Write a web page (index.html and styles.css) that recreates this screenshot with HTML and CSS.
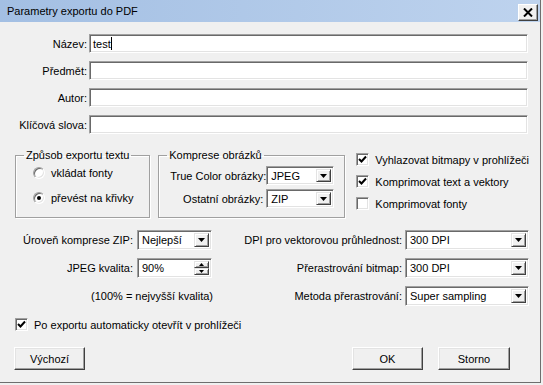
FILE: index.html
```html
<!DOCTYPE html>
<html lang="cs">
<head>
<meta charset="utf-8">
<title>Parametry exportu do PDF</title>
<link rel="stylesheet" href="styles.css">
</head>
<body>
<div class="window">
  <div class="titlebar">
    <span class="title">Parametry exportu do PDF</span>
    <div class="close"><svg width="10" height="9" viewBox="0 0 10 9"><path d="M1 0.5L9 8.5M9 0.5L1 8.5" stroke="#000" stroke-width="2"/></svg></div>
  </div>
  <div class="content">
    <div class="fields">
      <span class="lbl">Název:</span><div class="input">test<span class="caret"></span></div>
      <span class="lbl">Předmět:</span><div class="input"></div>
      <span class="lbl">Autor:</span><div class="input"></div>
      <span class="lbl">Klíčová slova:</span><div class="input"></div>
    </div>

    <div class="middle">
      <fieldset class="group g1">
        <legend>Způsob exportu textu</legend>
        <div class="g1-inner">
          <div class="radio"><span class="rbox"></span><span>vkládat fonty</span></div>
          <div class="radio"><span class="rbox on"></span><span>převést na křivky</span></div>
        </div>
      </fieldset>
      <fieldset class="group g2">
        <legend>Komprese obrázků</legend>
        <div class="g2-inner">
          <span class="lbl">True Color obrázky:</span>
          <div class="select"><span class="val">JPEG</span><span class="dd"><svg width="7" height="4" viewBox="0 0 7 4"><path d="M0 0h7L3.5 4z"/></svg></span></div>
          <span class="lbl">Ostatní obrázky:</span>
          <div class="select"><span class="val">ZIP</span><span class="dd"><svg width="7" height="4" viewBox="0 0 7 4"><path d="M0 0h7L3.5 4z"/></svg></span></div>
        </div>
      </fieldset>
      <div class="checks">
        <div class="check"><span class="cbox"><svg width="9" height="9" viewBox="0 0 9 9"><path d="M1 4L3.5 6.5L8 1.5" fill="none" stroke="#000" stroke-width="2"/></svg></span><span>Vyhlazovat bitmapy v prohlížeči</span></div>
        <div class="check"><span class="cbox"><svg width="9" height="9" viewBox="0 0 9 9"><path d="M1 4L3.5 6.5L8 1.5" fill="none" stroke="#000" stroke-width="2"/></svg></span><span>Komprimovat text a vektory</span></div>
        <div class="check"><span class="cbox"></span><span>Komprimovat fonty</span></div>
      </div>
    </div>

    <div class="lower">
      <div class="lower-left">
        <span class="lbl">Úroveň komprese ZIP:</span>
        <div class="select"><span class="val">Nejlepší</span><span class="dd"><svg width="7" height="4" viewBox="0 0 7 4"><path d="M0 0h7L3.5 4z"/></svg></span></div>
        <span class="lbl">JPEG kvalita:</span>
        <div class="spin"><span class="val">90%</span><span class="spinbtns"><span class="sb"><svg width="5" height="3" viewBox="0 0 5 3"><path d="M2.5 0L5 3H0z"/></svg></span><span class="sb"><svg width="5" height="3" viewBox="0 0 5 3"><path d="M0 0h5L2.5 3z"/></svg></span></span></div>
        <span class="note">(100% = nejvyšší kvalita)</span>
      </div>
      <div class="lower-right">
        <span class="lbl">DPI pro vektorovou průhlednost:</span>
        <div class="select"><span class="val">300 DPI</span><span class="dd"><svg width="7" height="4" viewBox="0 0 7 4"><path d="M0 0h7L3.5 4z"/></svg></span></div>
        <span class="lbl">Přerastrování bitmap:</span>
        <div class="select"><span class="val">300 DPI</span><span class="dd"><svg width="7" height="4" viewBox="0 0 7 4"><path d="M0 0h7L3.5 4z"/></svg></span></div>
        <span class="lbl">Metoda přerastrování:</span>
        <div class="select"><span class="val">Super sampling</span><span class="dd"><svg width="7" height="4" viewBox="0 0 7 4"><path d="M0 0h7L3.5 4z"/></svg></span></div>
      </div>
    </div>

    <div class="check autoopen"><span class="cbox"><svg width="9" height="9" viewBox="0 0 9 9"><path d="M1 4L3.5 6.5L8 1.5" fill="none" stroke="#000" stroke-width="2"/></svg></span><span>Po exportu automaticky otevřít v prohlížeči</span></div>

    <div class="buttons">
      <div class="btn">Výchozí</div>
      <div class="btn ok">OK</div>
      <div class="btn storno">Storno</div>
    </div>
  </div>
</div>
</body>
</html>
```
FILE: styles.css
```css
html, body {
  margin: 0;
  padding: 0;
}
body {
  background: #f0f0f0;
  font-family: "Liberation Sans", Arial, sans-serif;
  font-size: 11px;
  color: #000;
  width: 543px;
  height: 385px;
  overflow: hidden;
}
.window {
  width: 540px;
  height: 382px;
  border-right: 1px solid #6e6e6e;
  border-bottom: 1px solid #6e6e6e;
  background: #f0f0f0;
  box-sizing: content-box;
}
.titlebar {
  height: 22px;
  background: linear-gradient(to right, #a3bfe3, #bed3ee);
  display: flex;
  align-items: flex-start;
  padding: 0 2px 0 7px;
}
.title {
  flex: 1;
  line-height: 23px;
}
.close {
  margin-top: 4px;
  width: 20px;
  height: 17px;
  box-sizing: border-box;
  background: #f0f0f0;
  border: 1px solid;
  border-color: #fff #404040 #404040 #fff;
  box-shadow: inset -1px -1px #a0a0a0;
  display: flex;
  align-items: center;
  justify-content: center;
}
.close svg { display: block; }
.content {
  padding: 12px 11px 0 14px;
}
.lbl {
  text-align: right;
  white-space: nowrap;
}
.fields {
  display: grid;
  grid-template-columns: 73px 439px;
  column-gap: 2px;
  row-gap: 8px;
  grid-auto-rows: 19px;
  align-items: center;
}
.input, .select, .spin {
  height: 100%;
  box-sizing: border-box;
  background: #fff;
  border: 1px solid;
  border-color: #a0a0a0 #fff #fff #a0a0a0;
  box-shadow: inset 1px 1px #696969, inset -1px -1px #e3e3e3;
  display: flex;
  align-items: center;
  padding-left: 3px;
  white-space: nowrap;
}
.caret {
  display: inline-block;
  width: 1px;
  height: 13px;
  background: #000;
}
.select .val, .spin .val {
  flex: 1;
  padding-left: 1px;
}
.dd {
  align-self: stretch;
  margin: 2px 2px 2px 0;
  width: 15px;
  box-sizing: border-box;
  background: #f0f0f0;
  border: 1px solid;
  border-color: #e3e3e3 #404040 #404040 #e3e3e3;
  box-shadow: inset 1px 1px #fff, inset -1px -1px #a0a0a0;
  display: flex;
  align-items: center;
  justify-content: center;
}
.dd svg, .sb svg { display: block; }
.middle {
  display: flex;
  align-items: flex-start;
  margin-top: 15px;
  margin-left: 1px;
}
.group {
  margin: 0;
  padding: 0;
  border: 1px solid #a0a0a0;
  box-shadow: 1px 1px 0 #fff, inset 1px 1px 0 #fff;
  box-sizing: border-box;
  height: 69px;
  min-width: 0;
}
.group legend {
  margin-left: 8px;
  padding: 0 2px;
  line-height: 12px;
}
.g1 { width: 138px; }
.g2 { width: 191px; margin-left: 8px; }
.g1-inner {
  padding: 5px 0 0 17px;
  display: flex;
  flex-direction: column;
  gap: 11px;
}
.radio {
  display: flex;
  align-items: center;
  gap: 6px;
  height: 14px;
}
.rbox {
  width: 12px;
  height: 12px;
  box-sizing: border-box;
  border-radius: 50%;
  background: #fff;
  border: 1px solid;
  border-color: #a0a0a0 #fff #fff #a0a0a0;
  box-shadow: inset 1px 1px #696969, inset -1px -1px #e3e3e3;
  display: flex;
  align-items: center;
  justify-content: center;
}
.rbox.on::after {
  content: "";
  width: 4px;
  height: 4px;
  border-radius: 50%;
  background: #000;
}
.g2-inner {
  padding: 5px 0 0 11px;
  display: grid;
  grid-template-columns: 93px 68px;
  column-gap: 3px;
  row-gap: 4px;
  grid-auto-rows: 19px;
  align-items: center;
}
.checks {
  margin-left: 11px;
  margin-top: 4px;
  display: flex;
  flex-direction: column;
  gap: 9px;
}
.check {
  display: flex;
  align-items: center;
  gap: 6px;
  height: 13px;
  white-space: nowrap;
}
.cbox {
  width: 13px;
  height: 13px;
  box-sizing: border-box;
  background: #fff;
  border: 1px solid;
  border-color: #a0a0a0 #fff #fff #a0a0a0;
  box-shadow: inset 1px 1px #696969, inset -1px -1px #e3e3e3;
  display: flex;
  align-items: center;
  justify-content: center;
  flex: none;
}
.cbox svg { display: block; }
.lower {
  display: flex;
  margin-top: 12px;
}
.lower-left {
  display: grid;
  grid-template-columns: 119px 75px;
  column-gap: 4px;
  row-gap: 8px;
  grid-auto-rows: 20px;
  align-items: center;
}
.note {
  grid-column: 1 / -1;
  text-align: right;
  margin-right: -1px;
}
.spin .spinbtns {
  align-self: stretch;
  margin: 2px 2px 2px 0;
  width: 15px;
  display: flex;
  flex-direction: column;
}
.sb {
  flex: 1;
  box-sizing: border-box;
  background: #f0f0f0;
  border: 1px solid;
  border-color: #e3e3e3 #404040 #404040 #e3e3e3;
  box-shadow: inset 1px 1px #fff, inset -1px -1px #a0a0a0;
  display: flex;
  align-items: center;
  justify-content: center;
}
.lower-right {
  margin-left: auto;
  display: grid;
  grid-template-columns: auto 124px;
  column-gap: 3px;
  row-gap: 8px;
  grid-auto-rows: 20px;
  align-items: center;
}
.autoopen {
  margin-top: 12px;
  margin-left: 1px;
}
.buttons {
  display: flex;
  margin-top: 16px;
  margin-right: 19px;
}
.btn {
  width: 71px;
  height: 23px;
  box-sizing: border-box;
  background: #f0f0f0;
  border: 1px solid;
  border-color: #fff #404040 #404040 #fff;
  box-shadow: inset -1px -1px #a0a0a0, inset 1px 1px #e3e3e3;
  display: flex;
  align-items: center;
  justify-content: center;
}
.btn.ok { margin-left: auto; }
.btn.storno { margin-left: 15px; width: 72px; }
```
